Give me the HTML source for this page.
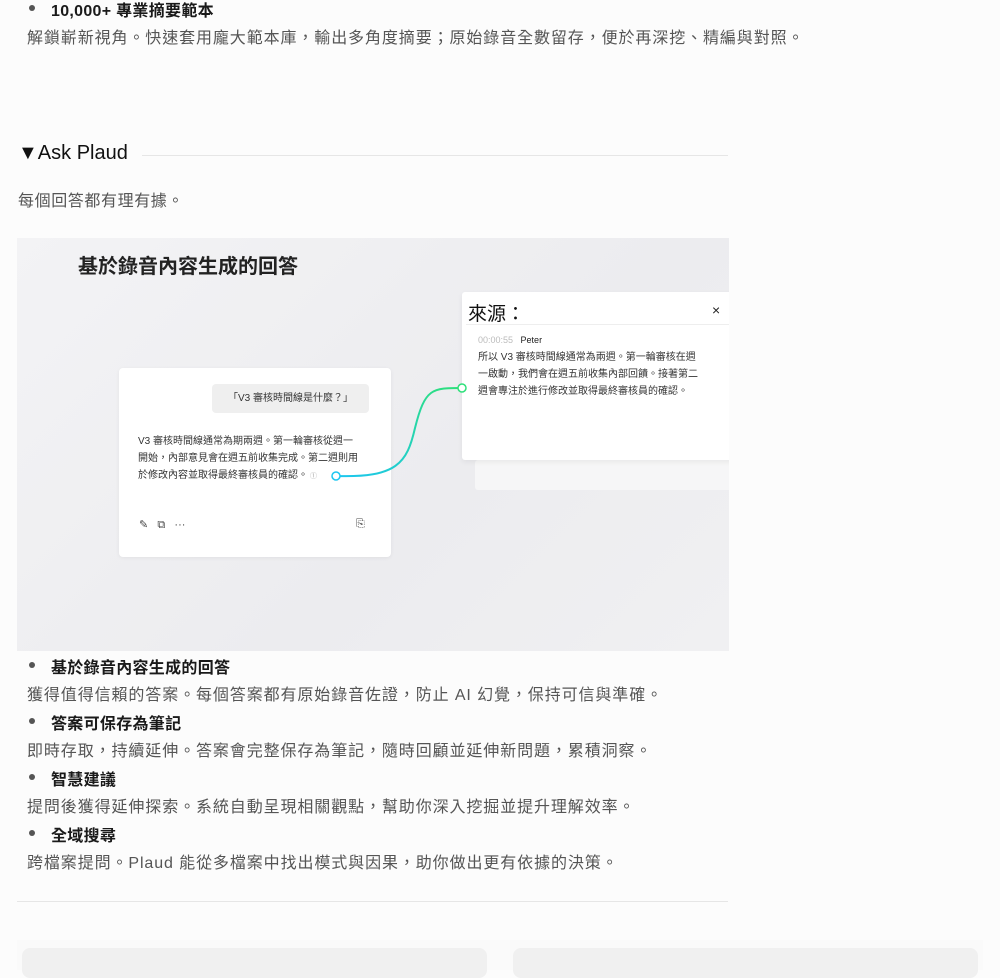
<!DOCTYPE html>
<html><head><meta charset="utf-8"><style>
*{margin:0;padding:0;box-sizing:border-box}
body{width:1000px;height:961px;background:#fcfcfc;font-family:"Liberation Sans","Noto Sans CJK TC",sans-serif;position:relative;overflow:hidden;color:#222}
.a{position:absolute;white-space:nowrap}
.h{font-size:16px;font-weight:bold;color:#1a1a1a;letter-spacing:0.3px}
.h:before{content:"";position:absolute;left:-22px;top:8px;width:6px;height:6px;border-radius:50%;background:#555}
.d{font-size:16px;color:#555;letter-spacing:0.9px}
.s{font-size:10px;color:#333;line-height:17px}
</style></head><body>
<div class="a h" style="left:51px;top:-3px">10,000+ 專業摘要範本</div>
<div class="a d" style="left:27px;top:24px">解鎖嶄新視角。快速套用龐大範本庫，輸出多角度摘要；原始錄音全數留存，便於再深挖、精編與對照。</div>

<div class="a" style="left:18px;top:142px;font-size:20px;color:#111">▼Ask Plaud</div>
<div class="a" style="left:142px;top:155px;width:586px;height:1px;background:#e6e6e6"></div>
<div class="a d" style="left:18px;top:187px;letter-spacing:0.6px">每個回答都有理有據。</div>

<div class="a" style="left:17px;top:238px;width:712px;height:413px;background:linear-gradient(135deg,#f3f3f5,#ececef 60%,#f0f0f2);overflow:hidden">
 <div class="a" style="left:61px;top:12px;font-size:20px;font-weight:bold;color:#222">基於錄音內容生成的回答</div>
 <div class="a" style="left:102px;top:130px;width:272px;height:189px;background:#fff;border-radius:4px;box-shadow:0 1px 4px rgba(0,0,0,.06)">
  <div class="a" style="left:93px;top:16px;width:157px;height:29px;background:#efefef;border-radius:4px;font-size:10px;color:#333;text-align:center;line-height:29px">「V3 審核時間線是什麼？」</div>
  <div class="a s" style="left:19px;top:65px">V3 審核時間線通常為期兩週。第一輪審核從週一<br>開始，內部意見會在週五前收集完成。第二週則用<br>於修改內容並取得最終審核員的確認。<span style="color:#aaa;font-size:7px"> ①</span></div>
  <div class="a" style="left:20px;top:150px;font-size:11px;color:#444">✎&nbsp;&nbsp;&nbsp;⧉&nbsp;&nbsp;&nbsp;···</div>
  <div class="a" style="left:237px;top:150px;font-size:11px;color:#444">⎘</div>
 </div>
 <div class="a" style="left:458px;top:222px;width:260px;height:30px;background:#f6f6f7;border-radius:3px"></div>
 <div class="a" style="left:445px;top:54px;width:280px;height:168px;background:#fff;border-radius:3px;box-shadow:0 2px 6px rgba(0,0,0,.06)">
  <div class="a" style="left:6px;top:7px;font-size:19px;color:#111">來源：</div>
  <div class="a" style="left:250px;top:10px;font-size:14px;color:#222">×</div>
  <div class="a" style="left:4px;top:32px;width:276px;height:1px;background:#eee"></div>
  <div class="a" style="left:16px;top:43px;font-size:9px"><span style="color:#bbb">00:00:55</span>&nbsp;&nbsp;&nbsp;Peter</div>
  <div class="a s" style="left:16px;top:57px">所以 V3 審核時間線通常為兩週。第一輪審核在週<br>一啟動，我們會在週五前收集內部回饋。接著第二<br>週會專注於進行修改並取得最終審核員的確認。</div>
 </div>
 <svg class="a" style="left:0;top:0" width="712" height="413">
  <defs><linearGradient id="g" x1="0" y1="1" x2="1" y2="0"><stop offset="0" stop-color="#1cc6f0"/><stop offset="1" stop-color="#2ee07a"/></linearGradient></defs>
  <path d="M319 238 C380 240 390 225 398 190 C408 150 415 150 445 150" fill="none" stroke="url(#g)" stroke-width="2"/>
  <circle cx="319" cy="238" r="4" fill="#fff" stroke="#1cc6f0" stroke-width="1.5"/>
  <circle cx="445" cy="150" r="4" fill="#fff" stroke="#2ee07a" stroke-width="1.5"/>
 </svg>
</div>

<div class="a h" style="left:51px;top:654px">基於錄音內容生成的回答</div>
<div class="a d" style="left:27px;top:681px">獲得值得信賴的答案。每個答案都有原始錄音佐證，防止 AI 幻覺，保持可信與準確。</div>
<div class="a h" style="left:51px;top:710px">答案可保存為筆記</div>
<div class="a d" style="left:27px;top:737px">即時存取，持續延伸。答案會完整保存為筆記，隨時回顧並延伸新問題，累積洞察。</div>
<div class="a h" style="left:51px;top:766px">智慧建議</div>
<div class="a d" style="left:27px;top:793px">提問後獲得延伸探索。系統自動呈現相關觀點，幫助你深入挖掘並提升理解效率。</div>
<div class="a h" style="left:51px;top:822px">全域搜尋</div>
<div class="a d" style="left:27px;top:849px">跨檔案提問。Plaud 能從多檔案中找出模式與因果，助你做出更有依據的決策。</div>

<div class="a" style="left:17px;top:901px;width:711px;height:1px;background:#e6e6e6"></div>
<div class="a" style="left:17px;top:940px;width:966px;height:30px;background:#fafafa"></div>
<div class="a" style="left:22px;top:948px;width:465px;height:30px;background:#f0f0f0;border-radius:8px"></div>
<div class="a" style="left:513px;top:948px;width:465px;height:30px;background:#f0f0f0;border-radius:8px"></div>
</body></html>
